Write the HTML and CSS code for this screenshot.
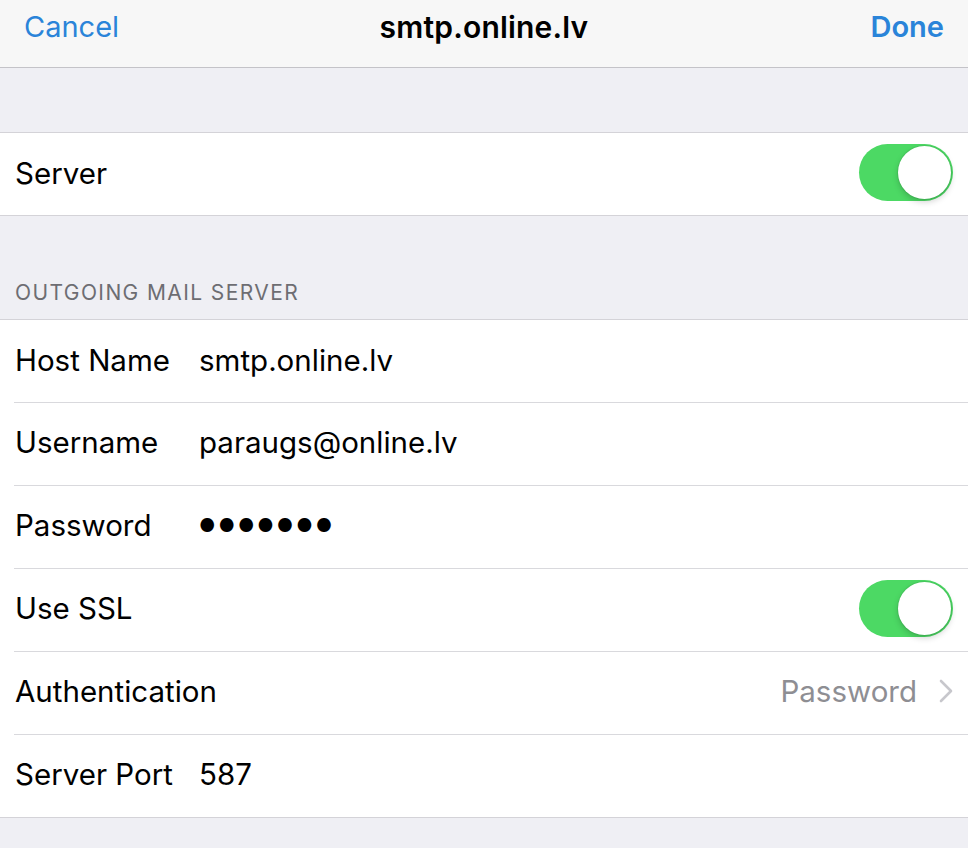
FILE: index.html
```html
<!DOCTYPE html>
<html lang="en">
<head>
<meta charset="utf-8">
<title>smtp.online.lv</title>
<link rel="stylesheet" href="styles.css">
</head>
<body>
<div class="screen">
  <header class="navbar">
    <span class="nav-btn nav-cancel">Cancel</span>
    <span class="nav-title">smtp.online.lv</span>
    <span class="nav-btn nav-done">Done</span>
  </header>

  <div class="spacer-top"></div>

  <section class="group">
    <div class="row">
      <span class="label">Server</span>
      <span class="switch on"><span class="knob"></span></span>
    </div>
  </section>

  <div class="section-header">OUTGOING MAIL SERVER</div>

  <section class="group">
    <div class="row field">
      <span class="label">Host Name</span>
      <span class="value">smtp.online.lv</span>
    </div>
    <div class="row field">
      <span class="label">Username</span>
      <span class="value">paraugs@online.lv</span>
    </div>
    <div class="row field">
      <span class="label">Password</span>
      <span class="value dots">●●●●●●●</span>
    </div>
    <div class="row">
      <span class="label">Use SSL</span>
      <span class="switch on"><span class="knob"></span></span>
    </div>
    <div class="row">
      <span class="label">Authentication</span>
      <span class="detail">Password
        <svg class="chevron" width="14" height="24" viewBox="0 0 14 24"><path d="M2 2 L12 12 L2 22" fill="none" stroke="#c7c7cc" stroke-width="2.6" stroke-linecap="round" stroke-linejoin="round"/></svg>
      </span>
    </div>
    <div class="row field">
      <span class="label">Server Port</span>
      <span class="value">587</span>
    </div>
  </section>

  <div class="spacer-bottom"></div>
</div>
</body>
</html>
```

FILE: styles.css
```css
* { box-sizing: border-box; }
html, body {
  margin: 0;
  padding: 0;
  background: #efeff4;
}
body {
  font-family: Inter, "Liberation Sans", Arial, sans-serif;
  color: #000;
  width: 968px;
  height: 848px;
  overflow: hidden;
}
.screen {
  display: flex;
  flex-direction: column;
}
.navbar {
  height: 68px;
  background: #f7f7f7;
  border-bottom: 1.5px solid #c4c3c8;
  display: grid;
  grid-template-columns: 1fr auto 1fr;
  align-items: center;
  padding: 0 24px 14px 24px;
  font-size: 29px;
}
.nav-btn {
  color: #2a84d9;
}
.nav-cancel {
  justify-self: start;
}
.nav-done {
  justify-self: end;
  font-weight: 600;
}
.nav-title {
  font-weight: 600;
  font-size: 30px;
  letter-spacing: 0.2px;
}
.spacer-top {
  height: 64px;
}
.group {
  background: #fff;
  border-top: 1px solid #d4d3d8;
  border-bottom: 1px solid #d4d3d8;
}
.row {
  height: 83px;
  display: flex;
  align-items: center;
  padding: 0 15px 3px 15px;
  font-size: 29.5px;
  position: relative;
}
.row + .row::before {
  content: "";
  position: absolute;
  left: 14px;
  right: 0;
  top: 0;
  height: 1px;
  background: #d9d9dd;
}
.group .row:first-child { height: 82px; }
.label {
  width: 184px;
  flex: none;
  white-space: nowrap;
}
.value {
  flex: 1;
}
.dots {
  font-size: 18px;
  letter-spacing: 3px;
}
.row .switch { margin-left: auto; }
.switch {
  width: 94px;
  height: 57px;
  border-radius: 29px;
  background: #4cd964;
  position: relative;
  flex: none;
}
.knob {
  position: absolute;
  right: 2px;
  top: 2px;
  width: 53px;
  height: 53px;
  border-radius: 50%;
  background: #fff;
  box-shadow: 0 3px 6px rgba(0,0,0,0.18), 0 0 0 1px rgba(0,0,0,0.06);
}
.detail {
  margin-left: auto;
  color: #8e8e93;
  display: flex;
  align-items: center;
  gap: 22px;
}
.chevron {
  display: block;
}
.section-header {
  height: 103px;
  display: flex;
  align-items: flex-end;
  padding: 0 15px 14px 15px;
  font-size: 21px;
  letter-spacing: 1.4px;
  color: #6d6d72;
  line-height: 24px;
}
.spacer-bottom {
  flex: 1;
}
```
